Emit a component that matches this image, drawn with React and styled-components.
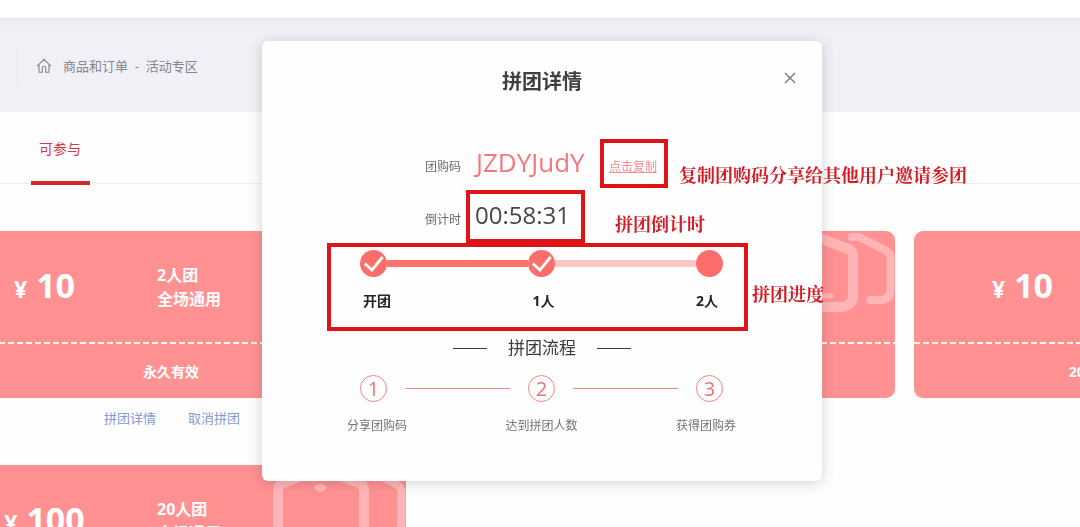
import styled, { createGlobalStyle } from "styled-components"

const GlobalStyle = createGlobalStyle`
* {
  box-sizing: border-box;
}
html, body, #root {
  height: 100%;
}
body {
  margin: 0;
  overflow: hidden;
  background-color: #fefefe;
  font-family: "Open Sans", "Noto Sans CJK SC", sans-serif;
  font-size: 13px;
}
h1, h2, p, ul, ol {
  margin: 0;
  padding: 0;
}
ul, ol {
  list-style: none;
}
`

const Page = styled.div`
height: 100%;
overflow: hidden;
`

//
const TopBar = styled.header`
height: 18px;
background-color: white;
`

const Banner = styled.div`
height: 94px;
padding: 29px 17px 0;
background: linear-gradient(#e6e6ec, #f1f0f6 9px);
`

const Breadcrumb = styled.nav`
display: flex;
align-items: center;
gap: 11px;
height: 37px;
padding-left: 18px;
border-left: 1px solid #e2e2e9;
color: #85858f;
`

const Crumbs = styled.span`
line-height: 20px;
white-space: pre;
`

const Tabs = styled.div`
display: flex;
height: 72px;
padding-left: 31px;
border-bottom: 1px solid #eeeeee;
`

const Tab = styled.button`
width: 59px;
height: 73px;
padding: 5px 0 0 8px;
border: 0;
border-bottom: 4px solid #d3272d;
background: none;
color: #cf3a45;
font-family: inherit;
font-size: 14px;
line-height: 20px;
text-align: left;
`

//
const Grid = styled.ul`
display: grid;
grid-template-columns: repeat(3, 470px);
column-gap: 19px;
margin: 47px 0 0 -64px;
`

const Item = styled.li`
height: 234px;
`

const Coupon = styled.div`
position: relative;
height: 167px;
overflow: hidden;
border-radius: 9px;
background-color: #ff9192;
color: white;
font-weight: 700;
`

const Pattern = styled.svg`
position: absolute;
top: 0;
right: 0;
`

const Face = styled.div`
display: flex;
align-items: center;
height: 111px;
`

const Price = styled.div`
display: flex;
align-items: baseline;
justify-content: center;
gap: 9px;
width: 217px;
font-size: 34px;
line-height: 40px;
`

const Yen = styled.span`
font-size: 23px;
`

const Rule = styled.div`
padding-left: 4px;
font-size: 16px;
line-height: 24px;
`

const Perforation = styled.div`
height: 2px;
background: repeating-linear-gradient(to right, #fff3ea 0 6px, transparent 6px 9px);
`

const Validity = styled.p`
font-size: 14px;
line-height: 56px;
text-align: center;
`

const Actions = styled.div`
display: flex;
gap: 32px;
padding: 10px 0 0 168px;
`

const Action = styled.a`
color: #829bd2;
line-height: 20px;
text-decoration: none;
`

//
const Overlay = styled.div`
position: fixed;
inset: 0;
display: flex;
align-items: flex-start;
justify-content: center;
padding: 41px 0 0 4px;
`

const Dialog = styled.section`
position: relative;
width: 560px;
height: 440px;
padding-top: 26px;
border-radius: 6px;
background-color: #fefefe;
box-shadow: 0 2px 14px rgba(40, 40, 60, 0.2);
`

const DialogTitle = styled.h1`
color: #3f4044;
font-size: 20px;
line-height: 30px;
text-align: center;
`

const Close = styled.button`
position: absolute;
top: 29px;
right: 24px;
display: flex;
padding: 2px;
border: 0;
background: none;
color: #77787c;
`

const Fields = styled.div`
padding: 41px 0 0 163px;
`

const Field = styled.div`
display: flex;
align-items: center;
height: 53px;
`

const FieldLabel = styled.span`
width: 50px;
padding-top: 5px;
color: #6d6d70;
font-size: 12px;
line-height: 20px;
`

const Code = styled.span`
width: 134px;
padding-left: 1px;
padding-bottom: 6px;
color: #f4787b;
font-size: 26px;
line-height: 36px;
`

const Time = styled.span`
padding-bottom: 6px;
color: #45474b;
font-size: 24px;
line-height: 36px;
`

const Copy = styled.button`
padding: 5px 0 0;
border: 0;
background: none;
color: #f28e91;
font-family: inherit;
font-size: 12px;
line-height: 20px;
text-decoration: underline;
`

const Track = styled.div`
display: flex;
align-items: center;
width: 363px;
margin: ${props => props.$top}px 0 0 98px;
`

const Dot = styled.span`
display: flex;
flex: none;
align-items: center;
justify-content: center;
width: 27px;
height: 27px;
border-radius: 50%;
background-color: #fd6e6a;
`

const Bar = styled.span`
flex: 1;
height: 7px;
background-color: ${props => props.$done ? "#fc726d" : "#ffc6c4"};
`

const Ring = styled.span`
display: flex;
flex: none;
align-items: center;
justify-content: center;
width: 27px;
height: 27px;
border: 1px solid #ee8583;
border-radius: 50%;
color: #f0716f;
font-size: 20px;
font-weight: 500;
line-height: 24px;
`

const Line = styled.span`
flex: 1;
height: 1px;
margin: 0 18px;
background-color: #f28c8c;
`

const Labels = styled.div`
display: flex;
justify-content: space-between;
margin: ${props => props.$strong ? "14px 104px 0 101px" : "14px 86px 0 85px"};
color: ${props => props.$strong ? "#242424" : "#747476"};
font-size: ${props => props.$strong ? "14px" : "12px"};
font-weight: ${props => props.$strong ? 700 : 400};
line-height: 20px;
`

const Subtitle = styled.h2`
display: flex;
align-items: center;
justify-content: center;
gap: 21px;
margin-top: 24px;
color: #3b3b3d;
font-size: 17px;
font-weight: 400;
line-height: 26px;

&::before,
&::after {
  content: "";
  width: 34px;
  height: 1px;
  background-color: #3b3b3d;
}
`

// callouts drawn over the dialog
const Frame = styled.div`
position: absolute;
left: ${props => props.$x}px;
top: ${props => props.$y}px;
width: ${props => props.$w}px;
height: ${props => props.$h}px;
border: 4px solid #dd1418;
pointer-events: none;
`

const Note = styled.p`
position: absolute;
left: ${props => props.$x}px;
top: ${props => props.$y}px;
color: #d41a22;
font-family: "Noto Serif CJK SC", "Noto Sans CJK SC", serif;
font-size: 18px;
font-weight: 700;
line-height: 26px;
white-space: nowrap;
`

const coupons = [
  { price: 10, rule: ["2人团", "全场通用"], validity: "永久有效", actions: true },
  { pattern: true },
  { price: 10, validity: "2020-12-31 23:59:59到期" },
  { price: 100, rule: ["20人团", "全场通用"], validity: "永久有效", pattern: true },
]

const HomeIcon = () => (
  <svg width="16" height="16" viewBox="0 0 16 16" fill="none" stroke="currentColor" strokeWidth="1.1">
    <path d="M1 8.2 8 1.3l7 6.9M3 6.7v7.6h3.3V9.8c0-2.1 3.4-2.1 3.4 0v4.5H13V6.7" />
  </svg>
)

const Tick = () => (
  <svg width="27" height="27" viewBox="0 0 27 27" fill="none" stroke="white" strokeWidth="2.8">
    <path d="M4.8 13.6 12 20 22.6 7" />
  </svg>
)

const HexPattern = () => (
  <Pattern width="140" height="90" viewBox="0 0 140 90" fill="none" stroke="#ffb5b5" strokeWidth="10" strokeLinejoin="round" strokeLinecap="round">
    <path d="M55 3 17 18Q12 20 12 26V64Q12 76 24 76H84Q98 76 98 64V26Q98 20 93 18L55 3" />
    <path d="M97 6H104L130 19Q135.500 22 135.500 27V58Q135.500 69 125 69H115" strokeWidth="8" />
    <path d="M60 65H76" strokeWidth="5" />
    <path d="M50 22.500 54.500 20.500 58.500 22.500 54.500 25Z" strokeWidth="4" fill="#ffb5b5" />
  </Pattern>
)

const CouponItem = ({ price, rule, validity, actions, pattern }) => (
  <Item>
    <Coupon>
      {pattern && <HexPattern />}
      <Face>
        {price && <Price><Yen>¥</Yen>{price}</Price>}
        {rule && <Rule>{rule[0]}<br />{rule[1]}</Rule>}
      </Face>
      <Perforation />
      {validity && <Validity>{validity}</Validity>}
    </Coupon>
    {actions && (
      <Actions>
        <Action href="#detail">拼团详情</Action>
        <Action href="#cancel">取消拼团</Action>
      </Actions>
    )}
  </Item>
)

const GroupDialog = () => (
  <Overlay>
    <Dialog role="dialog" aria-labelledby="dialog-title">
      <DialogTitle id="dialog-title">拼团详情</DialogTitle>
      <Close aria-label="关闭">
        <svg width="12" height="12" viewBox="0 0 12 12" stroke="currentColor" strokeWidth="1.4">
          <path d="M1 1 11 11M11 1 1 11" />
        </svg>
      </Close>

      <Fields>
        <Field>
          <FieldLabel>团购码</FieldLabel>
          <Code>JZDYJudY</Code>
          <Copy>点击复制</Copy>
        </Field>
        <Field>
          <FieldLabel>倒计时</FieldLabel>
          <Time>00:58:31</Time>
        </Field>
      </Fields>

      <Track $top={6}>
        <Dot><Tick /></Dot>
        <Bar $done />
        <Dot><Tick /></Dot>
        <Bar />
        <Dot />
      </Track>
      <Labels $strong>
        <span>开团</span>
        <span>1人</span>
        <span>2人</span>
      </Labels>

      <Subtitle>拼团流程</Subtitle>
      <Track $top={14}>
        <Ring>1</Ring>
        <Line />
        <Ring>2</Ring>
        <Line />
        <Ring>3</Ring>
      </Track>
      <Labels>
        <span>分享团购码</span>
        <span>达到拼团人数</span>
        <span>获得团购券</span>
      </Labels>

      <Frame $x={338} $y={98} $w={68} $h={49} />
      <Frame $x={204} $y={149} $w={119} $h={53} />
      <Frame $x={65} $y={202} $w={421} $h={88} />
      <Note $x={417} $y={120}>复制团购码分享给其他用户邀请参团</Note>
      <Note $x={353} $y={169}>拼团倒计时</Note>
      <Note $x={490} $y={239}>拼团进度</Note>
    </Dialog>
  </Overlay>
)

const App = () => {
  return (
    <Page>
      <GlobalStyle />
      <TopBar />
      <Banner>
        <Breadcrumb>
          <HomeIcon />
          <Crumbs>商品和订单  -  活动专区</Crumbs>
        </Breadcrumb>
      </Banner>
      <Tabs>
        <Tab>可参与</Tab>
      </Tabs>
      <Grid>
        {coupons.map((coupon, i) => (
          <CouponItem key={i} {...coupon} />
        ))}
      </Grid>
      <GroupDialog />
    </Page>
  )
}

export default App
